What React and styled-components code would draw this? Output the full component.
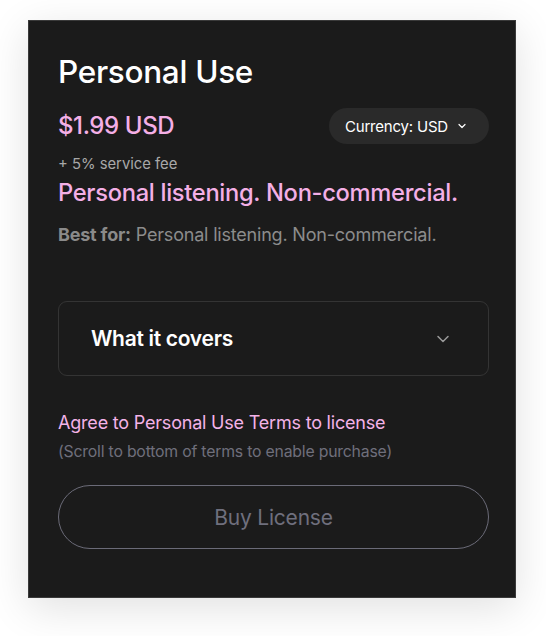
import React from "react";
import styled, { createGlobalStyle } from "styled-components";

const GlobalStyle = createGlobalStyle`
  body {
    margin: 0;
    background: #ffffff;
    font-family: Inter, "Liberation Sans", Arial, sans-serif;
  }
`;

function Chevron({ size, color, width = 2 }) {
  return (
    <svg width={size} height={size} viewBox="0 0 24 24" fill="none" stroke={color} strokeWidth={width} strokeLinecap="round" strokeLinejoin="round">
      <path d="M6 9l6 6 6-6" />
    </svg>
  );
}

function App() {
  return (
    <Page>
      <GlobalStyle />
      <Card>
        <Title>Personal Use</Title>
        <PriceRow>
          <Price>$1.99 USD</Price>
          <CurrencyButton>
            Currency: USD
            <Chevron size={12} color="#ffffff" width={2.4} />
          </CurrencyButton>
        </PriceRow>
        <Fee>+ 5% service fee</Fee>
        <Tagline>Personal listening. Non-commercial.</Tagline>
        <BestFor>
          <strong>Best for:</strong> Personal listening. Non-commercial.
        </BestFor>

        <Accordion>
          <AccordionTitle>What it covers</AccordionTitle>
          <Chevron size={20} color="#9a9a9a" width={1.8} />
        </Accordion>

        <Agree>Agree to Personal Use Terms to license</Agree>
        <Hint>(Scroll to bottom of terms to enable purchase)</Hint>

        <BuyButton disabled>Buy License</BuyButton>
      </Card>
    </Page>
  );
}

const Page = styled.div`
  padding: 20px 30px 38px 28px;
`;

const Card = styled.div`
  box-sizing: border-box;
  width: 488px;
  height: 578px;
  background: #1b1b1b;
  border: 1px solid #3a3a3a;
  box-shadow: 0 10px 40px rgba(0, 0, 0, 0.12);
  padding: 31px 26px 0 29px;
  display: flex;
  flex-direction: column;
`;

const Title = styled.h1`
  margin: 0;
  font-size: 31.5px;
  font-weight: 500;
  line-height: 40px;
  color: #ffffff;
  letter-spacing: -0.3px;
`;

const PriceRow = styled.div`
  display: flex;
  align-items: center;
  justify-content: space-between;
  margin-top: 16px;
`;

const Price = styled.div`
  font-size: 24px;
  font-weight: 500;
  line-height: 36px;
  color: #f4afe6;
  letter-spacing: -0.4px;
`;

const CurrencyButton = styled.button`
  display: flex;
  align-items: center;
  gap: 8px;
  height: 36px;
  padding: 0 21px 0 16px;
  border: none;
  border-radius: 18px;
  background: #2a2a2a;
  color: #ffffff;
  font-family: inherit;
  font-size: 15px;
  letter-spacing: -0.2px;
`;

const Fee = styled.div`
  margin-top: 10px;
  font-size: 14.8px;
  line-height: 20px;
  color: #a8a8a8;
`;

const Tagline = styled.div`
  margin-top: 4px;
  font-size: 23.7px;
  font-weight: 500;
  line-height: 30px;
  color: #f4afe6;
  letter-spacing: -0.3px;
`;

const BestFor = styled.div`
  margin-top: 16px;
  font-size: 18px;
  line-height: 22px;
  color: #8c8c8c;
  letter-spacing: -0.2px;

  strong {
    font-weight: 700;
    color: #8a8a8a;
  }
`;

const Accordion = styled.div`
  margin-top: 55px;
  box-sizing: border-box;
  height: 75px;
  border: 1px solid #343434;
  border-radius: 9px;
  display: flex;
  align-items: center;
  justify-content: space-between;
  padding: 0 35px 0 32px;
`;

const AccordionTitle = styled.div`
  font-size: 21px;
  font-weight: 600;
  color: #ffffff;
  letter-spacing: -0.3px;
`;

const Agree = styled.div`
  margin-top: 35px;
  font-size: 18px;
  line-height: 24px;
  color: #f4b3e8;
  letter-spacing: -0.2px;
`;

const Hint = styled.div`
  margin-top: 7px;
  font-size: 15.8px;
  line-height: 20px;
  color: #6f6f7b;
  letter-spacing: -0.2px;
`;

const BuyButton = styled.button`
  margin-top: 23px;
  height: 64px;
  width: 100%;
  border: 1px solid #6b6b78;
  border-radius: 32px;
  background: transparent;
  color: #6f6f7d;
  font-family: inherit;
  font-size: 21px;
  letter-spacing: -0.2px;
`;

export default App;
